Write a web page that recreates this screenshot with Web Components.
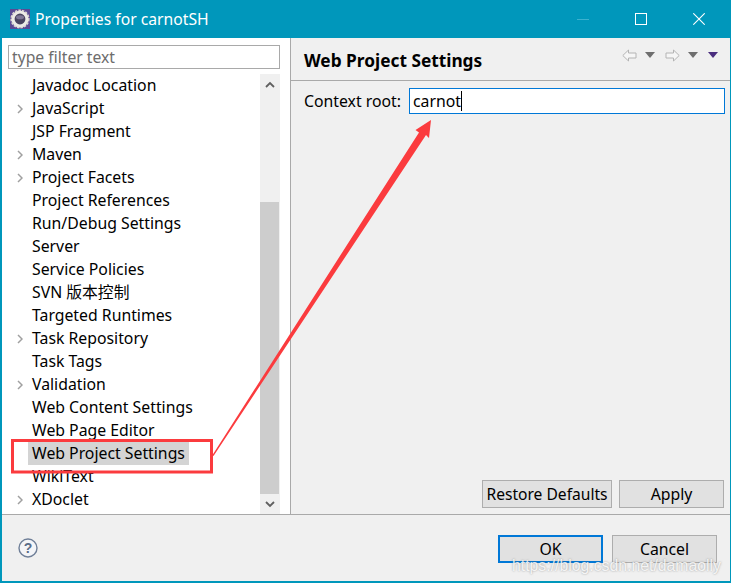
<!DOCTYPE html>
<html>
<head>
<meta charset="utf-8">
<title>Properties for carnotSH</title>
<style>
  html, body { margin: 0; padding: 0; background: #f0f0f0; }
</style>
</head>
<body>
<prop-dialog>
  <dlg-titlebar slot="title">Properties for carnotSH</dlg-titlebar>
  <prop-tree slot="left">
    <tree-row>Javadoc Location</tree-row>
    <tree-row arrow>JavaScript</tree-row>
    <tree-row>JSP Fragment</tree-row>
    <tree-row arrow>Maven</tree-row>
    <tree-row arrow>Project Facets</tree-row>
    <tree-row>Project References</tree-row>
    <tree-row>Run/Debug Settings</tree-row>
    <tree-row>Server</tree-row>
    <tree-row>Service Policies</tree-row>
    <tree-row>SVN 版本控制</tree-row>
    <tree-row>Targeted Runtimes</tree-row>
    <tree-row arrow>Task Repository</tree-row>
    <tree-row>Task Tags</tree-row>
    <tree-row arrow>Validation</tree-row>
    <tree-row>Web Content Settings</tree-row>
    <tree-row>Web Page Editor</tree-row>
    <tree-row selected>Web Project Settings</tree-row>
    <tree-row>WikiText</tree-row>
    <tree-row arrow>XDoclet</tree-row>
  </prop-tree>
  <prop-page slot="right"></prop-page>
  <dlg-footer slot="footer"></dlg-footer>
</prop-dialog>

<script>
// estilos compartidos del texto
const FONT = '"Noto Sans", "Noto Sans CJK SC", sans-serif';

class PropDialog extends HTMLElement {
  constructor() {
    super();
    this.attachShadow({ mode: 'open' });
    this.shadowRoot.innerHTML = `
      <style>
        :host {
          display: flex; flex-direction: column; position: relative;
          width: 731px; height: 583px; box-sizing: border-box;
          border: solid #0097bb; border-width: 0 1px 2px 2px;
          background: #f0f0f0; overflow: hidden;
          font-family: ${FONT}; color: #000;
        }
        .body { flex: 1; display: flex; min-height: 0; border-bottom: 1px solid #a9a9a9; }
        .left { width: 288px; flex: none; background: #fff; border-right: 1px solid #a9a9a9; }
        .right { flex: 1; min-width: 0; display: flex; }
        .over { position: absolute; left: -2px; top: 0; width: 731px; height: 583px; pointer-events: none; }
        .mark {
          position: absolute; left: 510px; top: 558px; font: 15.8px/16px "Liberation Sans", sans-serif;
          color: rgba(255,255,255,.85); white-space: nowrap;
          text-shadow: 0 0 2px rgba(90,90,90,.6);
        }
      </style>
      <slot name="title"></slot>
      <div class="body">
        <div class="left"><slot name="left"></slot></div>
        <div class="right"><slot name="right"></slot></div>
      </div>
      <slot name="footer"></slot>
      <svg class="over" viewBox="0 0 731 583">
        <rect x="12.5" y="440.5" width="199" height="31.5" fill="none" stroke="#fb3b3e" stroke-width="3"/>
        <path d="M431 120 L429 138 L426 135 L213.5 456 L212.5 455 L419 132.5 L415.5 130 Z" fill="#fb3b3e"/>
      </svg>
      <div class="mark">https://blog.csdn.net/damaolly</div>
    `;
  }
}

class DlgTitlebar extends HTMLElement {
  constructor() {
    super();
    this.attachShadow({ mode: 'open' });
    this.shadowRoot.innerHTML = `
      <style>
        :host {
          display: flex; align-items: center; height: 38px; flex: none;
          background: #0097bb; color: #fff; margin-left: -2px; padding-left: 10px;
          font-size: 15.7px;
        }
        .logo { width: 20px; height: 20px; margin-right: 5px; flex: none; }
        .txt { flex: 1; }
        .btns { display: flex; align-items: center; margin-right: 25px; gap: 46px; }
        svg { display: block; }
      </style>
      <svg class="logo" viewBox="0 0 20 20">
        <rect width="20" height="20" fill="#5a4a94"/>
        <circle cx="10" cy="10" r="7" fill="#4a4560" stroke="#ecebe6" stroke-width="3.2"/>
        <circle cx="10" cy="10" r="8.8" fill="none" stroke="#dcdad4" stroke-width="1.6" stroke-dasharray="2.4 1.2"/>
        <ellipse cx="10" cy="8.2" rx="4" ry="2" fill="#7d7796"/>
      </svg>
      <span class="txt"><slot></slot></span>
      <div class="btns">
        <svg width="12" height="12" viewBox="0 0 12 12"><path d="M0 6.5H12" stroke="#3cb2cf" stroke-width="1"/></svg>
        <svg width="12" height="12" viewBox="0 0 12 12"><rect x=".5" y=".5" width="11" height="11" fill="none" stroke="#fff"/></svg>
        <svg width="12" height="12" viewBox="0 0 12 12"><path d="M.3 .3L11.7 11.7M11.7 .3L.3 11.7" stroke="#fff" stroke-width="1.1"/></svg>
      </div>
    `;
  }
}

class PropTree extends HTMLElement {
  constructor() {
    super();
    this.attachShadow({ mode: 'open' });
    this.shadowRoot.innerHTML = `
      <style>
        :host { display: flex; flex-direction: column; height: 100%; box-sizing: border-box; padding: 7px 10px 0 6px; }
        .filter {
          height: 24px; box-sizing: border-box; border: 1px solid #a9a9a9; flex: none;
          font-size: 15.7px; line-height: 23px; color: #6d6d6d; padding-left: 3px; margin-bottom: 5px;
        }
        .wrap { flex: 1; display: flex; min-height: 0; }
        .rows { flex: 1; min-width: 0; overflow: hidden; }
        .bar { width: 20px; flex: none; display: flex; flex-direction: column; background: #f0f0f0; }
        .cap { height: 20px; flex: none; display: flex; align-items: center; justify-content: center; }
        .track { flex: 1; display: flex; flex-direction: column; }
        .space { height: 108px; flex: none; }
        .thumb { flex: 1; background: #cdcdcd; width: 19px; }
      </style>
      <div class="filter">type filter text</div>
      <div class="wrap">
        <div class="rows"><slot></slot></div>
        <div class="bar">
          <div class="cap"><svg width="10" height="7" viewBox="0 0 10 7"><path d="M1 6L5 2L9 6" fill="none" stroke="#606060" stroke-width="1.8"/></svg></div>
          <div class="track"><div class="space"></div><div class="thumb"></div></div>
          <div class="cap"><svg width="10" height="7" viewBox="0 0 10 7"><path d="M1 1L5 5L9 1" fill="none" stroke="#606060" stroke-width="1.8"/></svg></div>
        </div>
      </div>
    `;
  }
}

class TreeRow extends HTMLElement {
  constructor() {
    super();
    this.attachShadow({ mode: 'open' });
    this.shadowRoot.innerHTML = `
      <style>
        :host { display: flex; align-items: center; height: 23px; font-size: 15.8px; white-space: nowrap; }
        .arrow { width: 24px; flex: none; display: flex; justify-content: flex-end; padding-right: 9px; box-sizing: border-box; visibility: hidden; }
        :host([arrow]) .arrow { visibility: visible; }
        .txt { padding: 0 4px; line-height: 23px; margin-left: -4px; }
        :host([selected]) .txt { background: #d4d4d4; }
      </style>
      <span class="arrow"><svg width="6" height="10" viewBox="0 0 6 10"><path d="M1 1L5 5L1 9" fill="none" stroke="#a0a0a0" stroke-width="1.5"/></svg></span>
      <span class="txt"><slot></slot></span>
    `;
  }
}

class PropPage extends HTMLElement {
  constructor() {
    super();
    this.attachShadow({ mode: 'open' });
    this.shadowRoot.innerHTML = `
      <style>
        :host { display: flex; flex-direction: column; flex: 1; min-width: 0; }
        .head {
          height: 43px; box-sizing: border-box; flex: none; display: flex; align-items: center;
          border-bottom: 1px solid #a9a9a9; padding: 0 12px 0 13px;
        }
        h1 { margin: 0; font-size: 17.3px; font-weight: 700; flex: 1; position: relative; top: 1px; }
        .nav { display: flex; align-items: center; position: relative; top: -4px; }
        .nav svg { display: block; }
        .form { display: flex; align-items: center; padding: 7px 5px 0 13px; }
        label { font-size: 15.8px; width: 105px; flex: none; }
        .input {
          flex: 1; height: 26px; box-sizing: border-box; border: 1px solid #0078d7; background: #fff;
          font-size: 15.8px; line-height: 24px; padding-left: 3px; display: flex; align-items: center;
        }
        .caret { width: 1px; height: 20px; background: #000; }
        .grow { flex: 1; }
        .btns { display: flex; justify-content: flex-end; gap: 7px; padding: 0 6px 6px 0; }
      </style>
      <div class="head">
        <h1>Web Project Settings</h1>
        <div class="nav">
          <svg width="15" height="13" viewBox="0 0 15 13" style="margin-right:8px"><path d="M.8 6.5L6.5 1V4H14V9H6.5V12Z" fill="#f6f6f6" stroke="#b4b4b4"/></svg>
          <svg width="10" height="6" viewBox="0 0 10 6" style="margin-right:10px"><path d="M0 0H10L5 6Z" fill="#6e6e6e"/></svg>
          <svg width="15" height="13" viewBox="0 0 15 13" style="margin-right:8px"><path d="M14.2 6.5L8.5 1V4H1V9H8.5V12Z" fill="#f6f6f6" stroke="#b4b4b4"/></svg>
          <svg width="10" height="6" viewBox="0 0 10 6" style="margin-right:10px"><path d="M0 0H10L5 6Z" fill="#6e6e6e"/></svg>
          <svg width="10" height="6" viewBox="0 0 10 6"><path d="M0 0H10L5 6Z" fill="#4a2d7e"/></svg>
        </div>
      </div>
      <div class="form">
        <label>Context root:</label>
        <div class="input"><span>carnot</span><span class="caret"></span></div>
      </div>
      <div class="grow"></div>
      <div class="btns">
        <dlg-button style="width:130px;font-size:15.6px">Restore Defaults</dlg-button>
        <dlg-button style="width:105px">Apply</dlg-button>
      </div>
    `;
  }
}

class DlgFooter extends HTMLElement {
  constructor() {
    super();
    this.attachShadow({ mode: 'open' });
    this.shadowRoot.innerHTML = `
      <style>
        :host { display: flex; align-items: center; height: 66px; flex: none; padding: 0 13px 0 16px; box-sizing: border-box; }
        svg { display: block; }
        .grow { flex: 1; }
        .btns { display: flex; gap: 9px; position: relative; top: 1px; }
      </style>
      <svg width="20" height="20" viewBox="0 0 20 20">
        <circle cx="10" cy="10" r="9" fill="#f4f5f8" stroke="#6f7f98" stroke-width="1.4"/>
        <text x="10" y="15" text-anchor="middle" font-family="Liberation Sans" font-weight="700" font-size="14" fill="#5a6c88">?</text>
      </svg>
      <div class="grow"></div>
      <div class="btns">
        <dlg-button primary style="width:105px">OK</dlg-button>
        <dlg-button style="width:105px">Cancel</dlg-button>
      </div>
    `;
  }
}

class DlgButton extends HTMLElement {
  constructor() {
    super();
    this.attachShadow({ mode: 'open' });
    this.shadowRoot.innerHTML = `
      <style>
        :host {
          display: flex; align-items: center; justify-content: center; height: 28px; box-sizing: border-box;
          border: 1px solid #adadad; background: #e1e1e1; font-size: 15.8px; line-height: 16px; white-space: nowrap;
        }
        :host([primary]) { border: 2px solid #0078d7; }
      </style>
      <slot></slot>
    `;
  }
}

customElements.define('prop-dialog', PropDialog);
customElements.define('dlg-titlebar', DlgTitlebar);
customElements.define('prop-tree', PropTree);
customElements.define('tree-row', TreeRow);
customElements.define('prop-page', PropPage);
customElements.define('dlg-footer', DlgFooter);
customElements.define('dlg-button', DlgButton);
</script>
</body>
</html>
